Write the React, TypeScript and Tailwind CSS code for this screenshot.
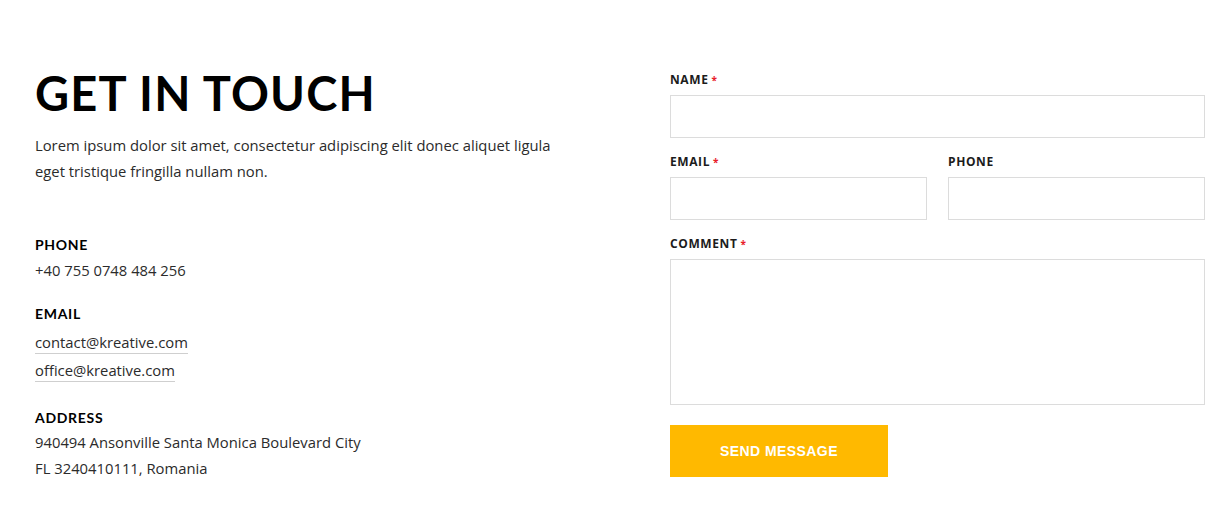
export default function App() {
  const heading = { fontFamily: "Lato, 'DejaVu Sans', sans-serif" };
  const body = { fontFamily: "'Open Sans', 'Liberation Sans', sans-serif" };

  const Label = ({ text, required }: { text: string; required?: boolean }) => (
    <label
      className="block text-[12px] leading-[16px] font-bold tracking-[0.05em] text-[#1c1c1c] mb-[7px]"
      style={body}
    >
      {text}
      {required && <span className="ml-[3px] text-[10px] text-[#e8202a]">*</span>}
    </label>
  );

  return (
    <div className="w-[1231px] h-[517px] bg-white flex">
      <div className="w-[670px] shrink-0 pl-[35px] pt-[69px]">
        <h1
          className="text-[47px] leading-[48px] font-bold tracking-[0.025em] text-black"
          style={heading}
        >
          GET IN TOUCH
        </h1>
        <p className="mt-[15px] text-[14.8px] leading-[26px] text-[#2b2b2b] w-[540px]" style={body}>
          Lorem ipsum dolor sit amet, consectetur adipiscing elit donec aliquet ligula eget tristique
          fringilla nullam non.
        </p>

        <div className="mt-[51px]">
          <h4 className="text-[14px] leading-[20px] font-bold tracking-[0.05em] text-black" style={heading}>
            PHONE
          </h4>
          <p className="mt-[2px] text-[14.8px] leading-[26px] text-[#2b2b2b]" style={body}>
            +40 755 0748 484 256
          </p>
        </div>

        <div className="mt-[21px]">
          <h4 className="text-[14px] leading-[20px] font-bold tracking-[0.05em] text-black" style={heading}>
            EMAIL
          </h4>
          <div className="mt-[7px] flex flex-col items-start gap-[5px]" style={body}>
            <a className="text-[14.8px] leading-[22px] text-[#2b2b2b] border-b border-[#cfcfcf]">
              contact@kreative.com
            </a>
            <a className="text-[14.8px] leading-[22px] text-[#2b2b2b] border-b border-[#cfcfcf]">
              office@kreative.com
            </a>
          </div>
        </div>

        <div className="mt-[26px]">
          <h4 className="text-[14px] leading-[20px] font-bold tracking-[0.05em] text-black" style={heading}>
            ADDRESS
          </h4>
          <p className="mt-[1px] text-[14.8px] leading-[26px] text-[#2b2b2b]" style={body}>
            940494 Ansonville Santa Monica Boulevard City
            <br />
            FL 3240410111, Romania
          </p>
        </div>
      </div>

      <form className="flex-1 pr-[26px] pt-[72px]">
        <Label text="NAME" required />
        <input className="block w-full h-[43px] border border-[#dcdcdc] outline-none" />

        <div className="mt-[16px] grid grid-cols-2 gap-x-[21px]">
          <div>
            <Label text="EMAIL" required />
            <input className="block w-full h-[43px] border border-[#dcdcdc] outline-none" />
          </div>
          <div>
            <Label text="PHONE" />
            <input className="block w-full h-[43px] border border-[#dcdcdc] outline-none" />
          </div>
        </div>

        <div className="mt-[16px]">
          <Label text="COMMENT" required />
          <textarea className="block w-full h-[146px] border border-[#dcdcdc] outline-none resize-none" />
        </div>

        <button
          type="button"
          className="mt-[20px] w-[218px] h-[52px] bg-[#ffb900] text-white text-[14px] font-bold tracking-[0.03em]"
          style={{ fontFamily: "'Liberation Sans', Arial, sans-serif" }}
        >
          SEND MESSAGE
        </button>
      </form>
    </div>
  );
}
